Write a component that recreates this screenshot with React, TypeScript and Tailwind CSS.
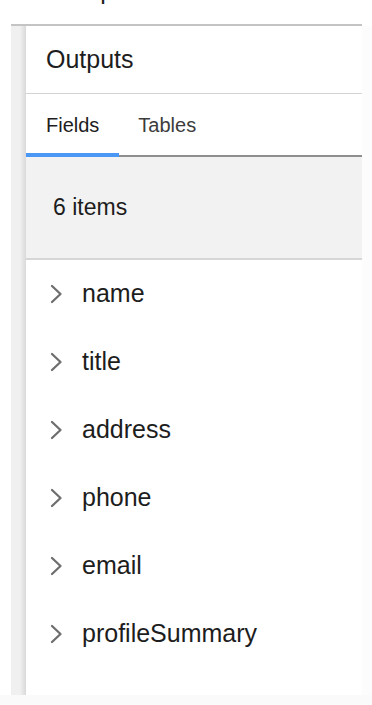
const fields = ['name', 'title', 'address', 'phone', 'email', 'profileSummary']

function Chevron() {
  return (
    <svg width="14" height="20" viewBox="0 0 14 20" fill="none" className="shrink-0">
      <polyline points="3,2 11.5,10 3,18" stroke="#6e6e6e" strokeWidth="2.3" strokeLinecap="round" strokeLinejoin="round" />
    </svg>
  )
}

export default function App() {
  return (
    <div className="w-[372px] h-[705px] bg-white overflow-hidden flex flex-col font-['Liberation_Sans',Arial,sans-serif] text-[#1d1d1d]">
      {/* clipped text from the section above */}
      <div className="h-[24px] overflow-hidden shrink-0">
        <div className="-mt-[25px] pl-[60px] text-[25px] leading-[30px]">Outputs</div>
      </div>
      <div className="ml-[11px] w-[351px] h-[2px] bg-[#c4c4c4] shrink-0" />

      <div className="flex h-[669px] shrink-0">
        <div className="w-[15px] ml-[11px] bg-gradient-to-r from-[#f0f0f0] from-60% to-[#d9d9d9]" />
        <div className="w-[336px] bg-white flex flex-col">
          <div className="h-[68px] flex items-center pl-[20px] border-b border-[#d4d4d4] text-[25px]">
            Outputs
          </div>

          <div className="relative flex h-[63px] border-b-2 border-[#8e8e8e]">
            <div className="relative flex items-center px-[20px] text-[20px] text-[#1d1d1d]">
              Fields
              <div className="absolute left-0 right-0 -bottom-[2px] h-[4px] bg-[#4a97f5]" />
            </div>
            <div className="flex items-center pl-[19px] text-[20px] text-[#3c3c3c]">Tables</div>
          </div>

          <div className="h-[103px] bg-[#f2f2f2] border-b-2 border-[#d6d6d6] flex items-center pl-[27px] text-[23px]">
            6 items
          </div>

          <div className="flex flex-col">
            {fields.map((f) => (
              <div key={f} className="h-[68px] flex items-center pl-[23px] gap-[19px] text-[25px]">
                <Chevron />
                <span>{f}</span>
              </div>
            ))}
          </div>
        </div>
        <div className="flex-1 bg-[#fcfcfc]" />
      </div>
      <div className="flex-1 bg-[#fafafa]" />
    </div>
  )
}
